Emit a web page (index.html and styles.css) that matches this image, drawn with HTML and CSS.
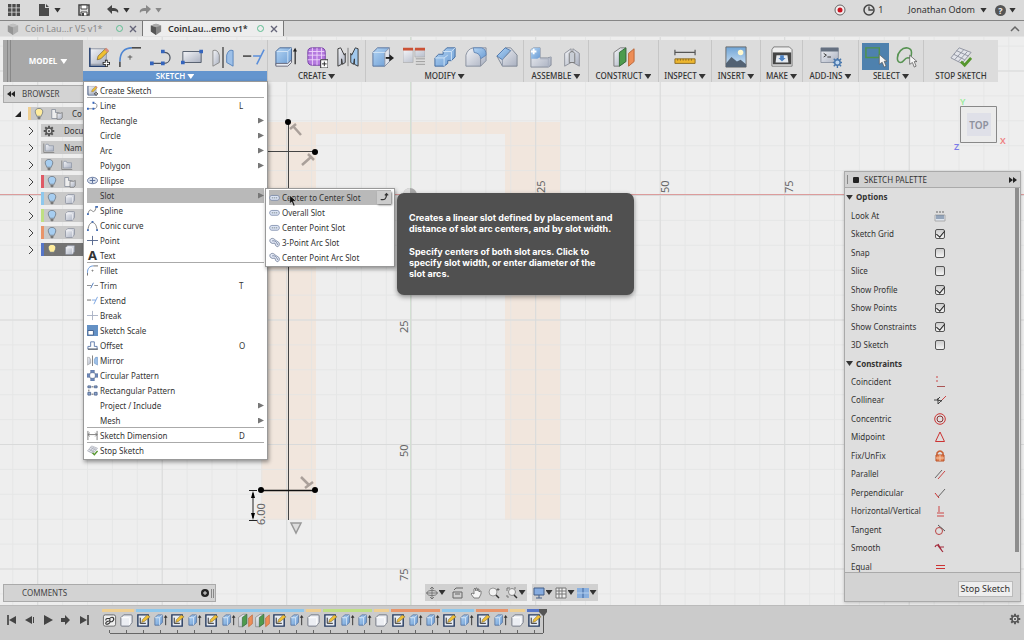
FILE: index.html
```html
<!DOCTYPE html>
<html lang="en">
<head>
<meta charset="utf-8">
<title>CoinLau...emo v1*</title>
<link rel="stylesheet" href="styles.css">
</head>
<body>
<svg class="defs" aria-hidden="true">
  <defs>
    <linearGradient id="gb" x1="0" y1="0" x2="1" y2="1"><stop offset="0" stop-color="#b4d5f4"/><stop offset="1" stop-color="#6a9bd3"/></linearGradient>
    <linearGradient id="gg" x1="0" y1="0" x2="1" y2="1"><stop offset="0" stop-color="#f4f5f8"/><stop offset="1" stop-color="#a9b0c0"/></linearGradient>
    <linearGradient id="gs" x1="0" y1="0" x2="0" y2="1"><stop offset="0" stop-color="#6fa4d6"/><stop offset="1" stop-color="#d3e5f5"/></linearGradient>
  </defs>
  <symbol id="sketch" viewBox="0 0 24 24"><path d="M2 3h18v17H2z" fill="url(#gg)" stroke="#8d94a2"/><path d="M2 2v20h19" fill="none" stroke="#26406f" stroke-width="1.600"/><path d="M10 15l1-4 8-8 3 3-8 8z" fill="#f0c030" stroke="#7b652c" stroke-width=".8"/><path d="M18 4l2-2 3 3-2 2z" fill="#d98c7c"/><path d="M20 15v8M16 19h8" stroke="#222" stroke-width="3"/><path d="M20 16v6M17 19h6" stroke="#fff" stroke-width="1.200"/></symbol>
  <symbol id="fillet" viewBox="0 0 24 24"><path d="M1 23v-6" stroke="#333" stroke-width="1.500"/><path d="M1 17C1 7 6 2 14 2" fill="none" stroke="#4f86d2" stroke-width="1.800"/><path d="M14 2h10" stroke="#333" stroke-width="1.500"/><path d="M12 10v5M9.500 12h5" stroke="#555"/></symbol>
  <symbol id="line" viewBox="0 0 24 24"><path d="M3 19h12c9 0 9-12 1-12h-3" fill="none" stroke="#4b5361" stroke-width="1.300"/><path d="M0 17h4v4H0zM12 17h4v4h-4zM12 4h4v4h-4z" fill="#3565bd"/></symbol>
  <symbol id="rect" viewBox="0 0 24 24"><path d="M2 6h20v12H2z" fill="url(#gg)" stroke="#4f5968"/><path d="M0 16h4v4H0zM20 4h4v4h-4z" fill="#3565bd"/></symbol>
  <symbol id="mirror" viewBox="0 0 24 24"><path d="M1 22V5q5-2 7 5v8z" fill="url(#gg)" stroke="#888"/><path d="M23 22V5q-5-2-7 5v8z" fill="#9dc0e8" stroke="#5582bb"/><path d="M12 1v23" stroke="#333" stroke-width="1.300"/></symbol>
  <symbol id="extend" viewBox="0 0 24 24"><path d="M0 11h9" stroke="#333" stroke-width="1.500"/><path d="M11 11h8M15 20l8-16" stroke="#5b8fda" stroke-width="1.700"/></symbol>
  <symbol id="extrude" viewBox="0 0 24 24"><path d="M1 6l4-4h13v15l-4 4H1z" fill="url(#gb)" stroke="#42618e"/><path d="M2 6h12v13M14 6l4-4" fill="none" stroke="#d5e6f6"/><path d="M1 19h13l4-4v3l-4 4H1z" fill="#e9edf3" stroke="#667"/><path d="M22 20V5" stroke="#222" stroke-width="1.300"/><path d="M19.500 6L22 2l2 4z" fill="#222"/></symbol>
  <symbol id="textrude" viewBox="0 0 16 16"><path d="M2 5l3-3h5v8l-3 3H2z" fill="url(#gb)" stroke="#4a6a98" stroke-width=".8"/><path d="M2 5h5v8M7 5l3-3" fill="none" stroke="#e3eefa" stroke-width=".8"/><path d="M13.500 13V4" stroke="#333"/><path d="M11.500 5l2-3 2 3z" fill="#333"/></symbol>
  <symbol id="form" viewBox="0 0 24 24"><path d="M2 6q0-4 5-4h9q5 0 5 5v9q0 5-5 5H7q-5 0-5-5z" fill="#b478df" stroke="#713c9f"/><path d="M2 10h19M2 15h19M7 2v19M12 2v19M17 2v19M3 6h17" stroke="#edd4fa" fill="none"/><path d="M16 15h8v9h-8z" fill="#fff" stroke="#222"/><path d="M20 17v5M17.500 19.500h5" stroke="#222"/></symbol>
  <symbol id="mirror3" viewBox="0 0 24 24"><path d="M1 3l3-1 4 8 1-2v10l-3 2-1-6v6l-4 2z" fill="url(#gg)" stroke="#333"/><path d="M23 3l-3-1-4 8-1-2v10l3 2 1-6v6l4 2z" fill="#a1c9ee" stroke="#333"/><path d="M12 2v20" stroke="#777"/></symbol>
  <symbol id="press" viewBox="0 0 24 24"><path d="M1 7l5-5h13v15l-5 5H1z" fill="url(#gb)" stroke="#557099"/><path d="M14 7l5-5v15l-5 5z" fill="#e2e5ec" stroke="#8992a5"/><path d="M1 7h13" stroke="#d7e8f7"/><path d="M15 13h5" stroke="#222" stroke-width="2"/><path d="M19 9l5 4-5 4z" fill="#222"/></symbol>
  <symbol id="filletwin" viewBox="0 0 24 24"><path d="M0 4h11v14H0zM13 4h11v8H13z" fill="url(#gg)" stroke="#aaa" stroke-width=".7"/><path d="M0 2h11v3H0zM13 2h11v3H13z" fill="#cb5236"/><path d="M14 14h10M14 17h10M14 20h10" stroke="#999"/></symbol>
  <symbol id="combine" viewBox="0 0 24 24"><path d="M1 13l4-4h5V6l4-4h9v10l-4 4h-4v3l-4 3H1z" fill="url(#gb)" stroke="#3f689d"/><path d="M1 13h10v9M10 6h9v10M19 6l4-4M11 13l4-3" fill="none" stroke="#d3e6f7"/></symbol>
  <symbol id="round" viewBox="0 0 24 24"><path d="M1 22V10q2-7 8-8h14v14l-6 6z" fill="url(#gg)" stroke="#858d9c"/><path d="M9 2h9q5 1 5 8l-6 4q0-6-7-7z" fill="url(#gb)" stroke="#6285b3"/><path d="M17 14v8" stroke="#858d9c"/></symbol>
  <symbol id="chamfer" viewBox="0 0 24 24"><path d="M1 11l9-9h6l7 8v12H7z" fill="url(#gg)" stroke="#7d8593"/><path d="M1 11l9-9 6 3-9 10z" fill="url(#gb)" stroke="#507aae"/><path d="M7 15v7M7 15l9-10" stroke="#8e98a8"/></symbol>
  <symbol id="component" viewBox="0 0 24 24"><path d="M1 4l3-2h7v11h8l4-1v9l-3 2H1z" fill="url(#gg)" stroke="#858c9a"/><path d="M1 4l3-2h7v10l-3 2H1z" fill="url(#gb)"/><path d="M4 3v6M1 6h6" stroke="#fff" stroke-width="2"/><path d="M11 14h9v9M20 14l3-2" fill="none" stroke="#aab0bf"/></symbol>
  <symbol id="joint" viewBox="0 0 24 24"><path d="M4 8l7-5v15l-7 4zM13 3l7 5v14l-7-4z" fill="url(#gg)" stroke="#8d9199"/><path d="M9 18V8q3-4 6 0v10z" fill="#c9ced6" stroke="#777"/></symbol>
  <symbol id="planes" viewBox="0 0 24 24"><path d="M1 7l7-5h6v15l-7 5H1z" fill="url(#gg)" stroke="#777"/><path d="M7 7l7-5v15l-7 5z" fill="#4d9b4d" stroke="#336c37"/><path d="M17 8l6-5v14l-6 5z" fill="#ee8e57" stroke="#b96435"/></symbol>
  <symbol id="ruler" viewBox="0 0 24 24"><path d="M1 7h22M1 4v6M23 4v6" stroke="#555" stroke-width="1.300"/><path d="M1 14h22v5H1z" fill="#edb62f" stroke="#8b6a22"/><path d="M4 14v2M7 14v2M10 14v2M13 14v2M16 14v2M19 14v2" stroke="#8b6a22"/></symbol>
  <symbol id="image" viewBox="0 0 24 24"><path d="M1 1h22v22H1z" fill="url(#gs)" stroke="#666"/><circle cx="17" cy="7" r="3" fill="#fff8ce"/><path d="M1 19l6-7 6 5 4-2 6 5v3H1z" fill="#536273"/></symbol>
  <symbol id="printer" viewBox="0 0 24 24"><path d="M3 1h17l3 3v18H1V4z" fill="#eee" stroke="#777"/><path d="M2 7h20v13H2z" fill="#454545"/><path d="M6 10h12l1 8H5z" fill="#e5eaf0"/><path d="M10 10h4v3h2l-4 4-4-4h2z" fill="#4d83c5"/></symbol>
  <symbol id="addins" viewBox="0 0 24 24"><path d="M1 2h19v16H1z" fill="url(#gg)" stroke="#8b93a1"/><path d="M1 2h19v4H1z" fill="#657080"/><path d="M4 8l3 2-3 2M8 12h4" fill="none" stroke="#333"/><path d="M19 13v11M14 18h10M15 14l8 8M23 14l-8 8" stroke="#4977ac" stroke-width="1.500"/><circle cx="19" cy="18" r="3" fill="#c0d8f0" stroke="#4977ac" stroke-width="1.500"/></symbol>
  <symbol id="selbox" viewBox="0 0 24 24"><path d="M2 3h14v10H2z" fill="none" stroke="#4f934b" stroke-width="1.500"/><path d="M16 10v10l3-2 2 5 2-1-2-5h3z" fill="#f5f5f5" stroke="#555" stroke-width=".700"/></symbol>
  <symbol id="lasso" viewBox="0 0 24 24"><path d="M15 13c-5-1-5 5-9 5-5 0-4-9 0-13 5-5 12-3 12 2 0 4-1 6-3 6z" fill="none" stroke="#579352" stroke-width="1.700"/><path d="M16 10v10l3-2 2 5 2-1-2-5h3z" fill="#f5f5f5" stroke="#555" stroke-width=".8"/></symbol>
  <symbol id="stopsketch" viewBox="0 0 24 24"><path d="M1 13L10 2l13 5-10 12z" fill="#e2e4ea" stroke="#8c919e"/><path d="M4 9l12 6M7 5l13 6M5 15L15 4M9 17L19 6" stroke="#8c919e"/><path d="M12 17l4 4 7-8" fill="none" stroke="#55962d" stroke-width="3"/></symbol>
  <symbol id="box" viewBox="0 0 16 16"><path d="M2 5l3-3h8q1 0 1 1v7l-3 4H3q-1 0-1-1z" fill="#eceef3" stroke="#6f7480"/><path d="M2.500 5h8q1 0 1 1v7" fill="none" stroke="#fff"/></symbol>
  <symbol id="body" viewBox="0 0 16 16"><path d="M2 5l3-3h8q1 0 1 1v7l-3 4H3q-1 0-1-1z" fill="url(#gg)" stroke="#8a8f9c"/><path d="M2.500 5h8q1 0 1 1v7" fill="none" stroke="#f4f4f8"/></symbol>
  <symbol id="tsketch" viewBox="0 0 16 16"><path d="M2 2h11v12H2z" fill="#e8edf4" stroke="#263b60" stroke-width="1.500"/><path d="M4.500 5v6h6" fill="none" stroke="#222"/><path d="M6 10l1-3 5-5 3 2-6 5z" fill="#efbf36" stroke="#695a36" stroke-width=".5"/></symbol>
  <symbol id="link" viewBox="0 0 16 16"><rect x="1.500" y="2" width="13" height="12" rx="2" fill="#eee" stroke="#666"/><path d="M4 8c0-3 2-2 4-2 4-4 6 1 3 3-2 1-4-1-2-2M9 9c-1 3-5 4-5 2s4-3 5-2" fill="none" stroke="#333" stroke-width="1.200"/></symbol>
  <symbol id="bulb" viewBox="0 0 16 16"><path d="M5 11c0-2-2-3-2-6 0-6 10-6 10 0 0 3-2 4-2 6z" fill="currentColor" stroke="#66707c"/><path d="M6 12h4v2l-1 1H7l-1-1z" fill="#777"/></symbol>
  <symbol id="folder" viewBox="0 0 16 16"><path d="M1 14V2M1 14h14" stroke="#777"/><path d="M3 12V5l1-2h3l1 2h6v7z" fill="url(#gg)" stroke="#8d95a5"/></symbol>
  <symbol id="gear" viewBox="0 0 16 16"><path d="M8 1v14M1 8h14M3 3l10 10M13 3L3 13" stroke="currentColor" stroke-width="2.500"/><circle cx="8" cy="8" r="4" fill="#ddd" stroke="currentColor" stroke-width="2"/><circle cx="8" cy="8" r="1.500" fill="currentColor"/></symbol>
  <symbol id="comp" viewBox="0 0 16 16"><path d="M1 2h5v4h4l3 2v6H1z" fill="#eee" stroke="#818896"/><path d="M8 7h5l2-1v7l-2 2H8z" fill="url(#gg)" stroke="#777"/></symbol>
  <symbol id="slot" viewBox="0 0 16 12"><path d="M4 3h8c4 0 4 7 0 7H4c-4 0-4-7 0-7z" fill="#dce4f4" stroke="#66779c"/><path d="M4 6.500h8" stroke="#566" stroke-dasharray="2 1"/></symbol>
  <symbol id="arcslot" viewBox="0 0 14 12"><path d="M2 6c-3-4 2-7 5-4s7 3 6 7-5 2-5-1-3 1-6-2z" fill="#e2e8f5" stroke="#667491"/><path d="M4 4c4-1 6 2 7 5" fill="none" stroke="#667491"/></symbol>
  <symbol id="spline" viewBox="0 0 12 12"><path d="M1 10C4-2 7 15 10 2" fill="none" stroke="#777"/><path d="M0 9h2v2H0zM9 1h3v2H9z" fill="#456fb6"/></symbol>
  <symbol id="conic" viewBox="0 0 12 12"><path d="M1 11C2 0 10 0 11 11" fill="none" stroke="#777"/><path d="M0 10h2v2H0zM10 10h2v2h-2zM5 1h2v2H5z" fill="#456fb6"/></symbol>
  <symbol id="point" viewBox="0 0 12 12"><path d="M6 1v10M0 6h12" stroke="#52648b"/></symbol>
  <symbol id="trim" viewBox="0 0 12 12"><path d="M0 6h5M8 6h4" stroke="#888"/><path d="M4 9l3-6" stroke="#527dbb"/></symbol>
  <symbol id="scale" viewBox="0 0 12 12"><path d="M0 0h12v12H0z" fill="#6390c4"/><path d="M1 6h6v5H1z" fill="#fff" stroke="#405c88"/></symbol>
  <symbol id="offset" viewBox="0 0 12 12"><path d="M1 10V7h3V2h4v5h3v3z" fill="none" stroke="#5c78aa"/><path d="M1 10h11" stroke="#555"/></symbol>
  <symbol id="circ" viewBox="0 0 12 12"><circle cx="6" cy="6" r="3.500" fill="none" stroke="#7f8da8"/><path d="M4 0h4v3H4zM4 9h4v3H4zM0 4h3v4H0zM9 4h3v4H9z" fill="#6e89bb" stroke="#526993" stroke-width=".5"/></symbol>
  <symbol id="rpat" viewBox="0 0 12 12"><path d="M1 1h3v2H1zM8 1h3v2H8zM1 8h3v3H1zM8 8h3v3H8z" fill="#8fa6cd" stroke="#526993"/><path d="M5 2h2M2 5v2M5 10h2" stroke="#555"/></symbol>
  <symbol id="dim" viewBox="0 0 12 12"><path d="M1 1v10M11 1v10M1 5h10M3 3L1 5l2 2M9 3l2 2-2 2" fill="none" stroke="#777"/></symbol>
  <symbol id="ellipse" viewBox="0 0 12 12"><ellipse cx="6" cy="6" rx="5.500" ry="3.500" fill="#dbe2ee" stroke="#64759c"/><path d="M3 6h6M6 3v6" stroke="#566b98"/></symbol>
  <symbol id="cube" viewBox="0 0 14 14"><path d="M1 3l6-2 6 2v7l-6 4-6-4z" fill="#858585"/><path d="M1 3l6 2v9l-6-4z" fill="#555"/><path d="M1 3l6-2 6 2-6 2z" fill="#aaa"/></symbol>
  <symbol id="close" viewBox="0 0 8 8"><path d="M1 1l6 6M7 1L1 7" stroke="#66667a" stroke-width="1.400"/></symbol>
</svg>

<div class="app">
  <header class="topbar">
    <button class="ib" aria-label="Data panel"><svg width="12" height="12" viewBox="0 0 12 12"><path d="M0 0h3.400v3.400H0zM4.300 0h3.400v3.400H4.300zM8.600 0H12v3.400H8.600zM0 4.300h3.400v3.400H0zM4.300 4.300h3.400v3.400H4.300zM8.600 4.300H12v3.400H8.600zM0 8.600h3.400V12H0zM4.300 8.600h3.400V12H4.300zM8.600 8.600H12V12H8.600z" fill="#4b4b4b"/></svg></button>
    <button class="ib file" aria-label="File"><svg width="10" height="12" viewBox="0 0 10 12"><path d="M0 0h6v4h4v8H0zM7 0l3 3H7z" fill="#4b4b4b"/></svg><i class="caret"></i></button>
    <button class="ib save" aria-label="Save"><svg width="12" height="12" viewBox="0 0 12 12"><path d="M1 1h10v10H1z" fill="#ddd" stroke="#444" stroke-width="1.500"/><path d="M3 1h6v4H3zM3 8h6v4H3z" fill="#fff" stroke="#444"/><path d="M4 9h2v3H4z" fill="#444"/></svg></button>
    <button class="ib undo" aria-label="Undo"><svg width="12" height="10" viewBox="0 0 12 10"><path d="M0 4l5-4v3c5 0 7 2 6 5-1-2-3-2-6-2v3z" fill="#454545"/></svg><i class="caret"></i></button>
    <button class="ib redo" aria-label="Redo"><svg width="12" height="10" viewBox="0 0 12 10"><path d="M12 4L7 0v3C2 3 0 5 1 8c1-2 3-2 6-2v3z" fill="#888"/></svg><i class="caret"></i></button>
    <span class="grow"></span>
    <button class="ib rec" aria-label="Record"><svg width="12" height="12" viewBox="0 0 12 12"><circle cx="6" cy="6" r="5" fill="#f4eeee" stroke="#666"/><circle cx="6" cy="6" r="2.500" fill="#c91622"/></svg></button>
    <button class="ib jobs"><svg width="12" height="12" viewBox="0 0 12 12"><circle cx="6" cy="6" r="5" fill="none" stroke="#444" stroke-width="1.500"/><path d="M6 2.500V6h4" fill="none" stroke="#444" stroke-width="1.300"/></svg>1</button>
    <button class="ib user">Jonathan Odom<i class="caret"></i></button>
    <button class="ib help" aria-label="Help"><span class="q">?</span><i class="caret"></i></button>
  </header>
  <nav class="tabs">
    <div class="tab"><svg width="12" height="12"><use href="#cube"/></svg><span>Coin Lau...r V5 v1*</span><i class="ring"></i><button aria-label="Close tab"><svg><use href="#close"/></svg></button></div>
    <div class="tab on"><svg width="12" height="12"><use href="#cube"/></svg><span>CoinLau...emo v1*</span><i class="ring"></i><button aria-label="Close tab"><svg><use href="#close"/></svg></button></div>
    <span class="grow"></span>
    <svg width="10" height="7" viewBox="0 0 10 7"><path d="M1 6l4-4 4 4" fill="none" stroke="#666" stroke-width="1.500"/></svg>
  </nav>

  <main class="work">
    <svg class="canvas" viewBox="0 37 1024 568" preserveAspectRatio="xMinYMin slice" role="img" aria-label="Sketch canvas">
      <defs>
        <pattern id="minor" x="410.700" y="195" width="24.900" height="24.900" patternUnits="userSpaceOnUse"><path d="M.5 0v25M0 .5h25" stroke="#e3e4e4"/></pattern>
        <pattern id="major" x="410.700" y="195" width="124.500" height="124.500" patternUnits="userSpaceOnUse"><path d="M.5 0v125M0 .5h125" stroke="#d9dada"/></pattern>
      </defs>
      <path d="M0 36h3000v2000H0z" fill="#eee"/>
      <path d="M261 122h299v398h-55V134H316v386h-55z" fill="#f1e6dd"/>
      <path d="M0 36h3000v2000H0z" fill="url(#minor)" opacity=".8"/>
      <path d="M0 36h3000v2000H0z" fill="url(#major)"/>
      <path d="M410 36h1v2000h-1z" fill="#d2dfd2"/>
      <path d="M0 194h3000v1H0z" fill="#dc9c9c"/>
      <circle cx="410" cy="195" r="7" fill="#aaa"/><path d="M410 188v7h-7a7 7 0 0 1 7-7z" fill="#ddd"/>
      <path d="M288.500 122v398M260 151.500h55" stroke="#444"/><path d="M261 490.500h54" stroke="#111" stroke-width="1.500"/>
      <circle cx="288" cy="122" r="3"/><circle cx="315" cy="152" r="3"/><circle cx="261" cy="490" r="3"/><circle cx="315" cy="490" r="3"/>
      <path d="M290 129l6-5M293 126l8 9M308 154l6 6M311 157l-9 8M301 477l8 8M305 488l8-6" stroke="#aaa09a" stroke-width="2.500"/>
      <path d="M249 490.500h8M249 520.500h8M253 493v25" stroke="#222"/><path d="M253 491l2 7h-4zM253 520l2-7h-4z"/>
      <path d="M291 523h10l-5 10z" fill="#ddd" stroke="#999" stroke-width="1.500"/>
      <g class="axis"><text transform="translate(545 193) rotate(-90)">25</text><text transform="translate(669 193) rotate(-90)">50</text><text transform="translate(793 193) rotate(-90)">75</text><text transform="translate(408 333) rotate(-90)">25</text><text transform="translate(408 457) rotate(-90)">50</text><text transform="translate(408 581) rotate(-90)">75</text><text transform="translate(265 525) rotate(-90)">6.00</text></g>
    </svg>

    <div class="toolbar">
      <button class="model">MODEL<i class="caret"></i></button>
      <section class="grp g-sketch">
        <div class="icons"><svg><use href="#sketch"/></svg><svg><use href="#fillet"/></svg><svg><use href="#line"/></svg><svg><use href="#rect"/></svg><svg><use href="#mirror"/></svg><svg><use href="#extend"/></svg></div>
        <button class="gl active" aria-expanded="true">SKETCH<i class="caret"></i></button>
        <ul class="menu">
          <li><button><svg><use href="#sketch"/></svg>Create Sketch</button></li>
          <li class="sep"><button><svg><use href="#line"/></svg>Line<kbd>L</kbd></button></li>
          <li><button><svg></svg>Rectangle<i class="more"></i></button></li>
          <li><button><svg></svg>Circle<i class="more"></i></button></li>
          <li><button><svg></svg>Arc<i class="more"></i></button></li>
          <li><button><svg></svg>Polygon<i class="more"></i></button></li>
          <li><button><svg><use href="#ellipse"/></svg>Ellipse</button></li>
          <li class="open"><button class="hot"><svg></svg>Slot<i class="more"></i></button>
            <ul class="submenu">
              <li><button class="hot"><svg><use href="#slot"/></svg>Center to Center Slot<span class="pin"><svg viewBox="0 0 12 12"><path d="M2 9c5 1 7-1 7-6M7 4l2-2 2 2" fill="none" stroke="#333" stroke-width="1.500"/></svg></span></button></li>
              <li><button><svg><use href="#slot"/></svg>Overall Slot</button></li>
              <li><button><svg><use href="#slot"/></svg>Center Point Slot</button></li>
              <li><button><svg><use href="#arcslot"/></svg>3-Point Arc Slot</button></li>
              <li><button><svg><use href="#arcslot"/></svg>Center Point Arc Slot</button></li>
            </ul>
            <div class="tip" role="tooltip"><p>Creates a linear slot defined by placement and<br>distance of slot arc centers, and by slot width.</p><p>Specify centers of both slot arcs. Click to<br>specify slot width, or enter diameter of the<br>slot arcs.</p></div>
            <svg class="pointer" viewBox="0 0 12 18"><path d="M1 1v13l3-3 2.500 6 2.500-1-2.500-6h4.500z" fill="#111" stroke="#eee" stroke-width=".7"/></svg>
          </li>
          <li><button><svg><use href="#spline"/></svg>Spline</button></li>
          <li><button><svg><use href="#conic"/></svg>Conic curve</button></li>
          <li><button><svg><use href="#point"/></svg>Point</button></li>
          <li><button><b>A</b>Text</button></li>
          <li class="sep"><button><svg><use href="#fillet"/></svg>Fillet</button></li>
          <li><button><svg><use href="#trim"/></svg>Trim<kbd>T</kbd></button></li>
          <li><button><svg><use href="#extend"/></svg>Extend</button></li>
          <li><button><svg class="dim"><use href="#point"/></svg>Break</button></li>
          <li><button><svg><use href="#scale"/></svg>Sketch Scale</button></li>
          <li><button><svg><use href="#offset"/></svg>Offset<kbd>O</kbd></button></li>
          <li><button><svg><use href="#mirror"/></svg>Mirror</button></li>
          <li><button><svg><use href="#circ"/></svg>Circular Pattern</button></li>
          <li><button><svg><use href="#rpat"/></svg>Rectangular Pattern</button></li>
          <li><button><svg></svg>Project / Include<i class="more"></i></button></li>
          <li><button><svg></svg>Mesh<i class="more"></i></button></li>
          <li class="sep"><button><svg><use href="#dim"/></svg>Sketch Dimension<kbd>D</kbd></button></li>
          <li class="sep"><button><svg><use href="#stopsketch"/></svg>Stop Sketch</button></li>
        </ul>
      </section>
      <section class="grp g-create"><div class="icons"><svg><use href="#extrude"/></svg><svg><use href="#form"/></svg><svg><use href="#mirror3"/></svg></div><button class="gl">CREATE<i class="caret"></i></button></section>
      <section class="grp g-modify"><div class="icons"><svg><use href="#press"/></svg><svg><use href="#filletwin"/></svg><svg><use href="#combine"/></svg><svg><use href="#round"/></svg><svg><use href="#chamfer"/></svg></div><button class="gl">MODIFY<i class="caret"></i></button></section>
      <section class="grp g-assemble"><div class="icons"><svg><use href="#component"/></svg><svg><use href="#joint"/></svg></div><button class="gl">ASSEMBLE<i class="caret"></i></button></section>
      <section class="grp g-construct"><div class="icons"><svg><use href="#planes"/></svg></div><button class="gl">CONSTRUCT<i class="caret"></i></button></section>
      <section class="grp g-inspect"><div class="icons"><svg><use href="#ruler"/></svg></div><button class="gl">INSPECT<i class="caret"></i></button></section>
      <section class="grp g-insert"><div class="icons"><svg><use href="#image"/></svg></div><button class="gl">INSERT<i class="caret"></i></button></section>
      <section class="grp g-make"><div class="icons"><svg><use href="#printer"/></svg></div><button class="gl">MAKE<i class="caret"></i></button></section>
      <section class="grp g-addins"><div class="icons"><svg><use href="#addins"/></svg></div><button class="gl">ADD-INS<i class="caret"></i></button></section>
      <section class="grp g-select"><div class="icons"><svg class="sel"><use href="#selbox"/></svg><svg><use href="#lasso"/></svg></div><button class="gl">SELECT<i class="caret"></i></button></section>
      <section class="grp g-stop"><div class="icons"><svg><use href="#stopsketch"/></svg></div><button class="gl">STOP SKETCH</button></section>
    </div>

    <div class="stage">
      <aside class="left">
        <div class="phead browser"><svg width="8" height="6" viewBox="0 0 8 6"><path d="M4 0v6L0 3zM8 0v6L4 3z" fill="#222"/></svg>BROWSER</div>
        <div class="tree">
          <div class="node root"><svg class="tw" viewBox="0 0 8 8"><path d="M7 1v6H1z" fill="#222"/></svg><div class="nb yl"><svg class="lit"><use href="#bulb"/></svg><svg><use href="#comp"/></svg><span>Co</span></div></div>
          <div class="node"><svg class="tw" viewBox="0 0 8 8"><path d="M2 0l4 4-4 4" fill="none" stroke="#444"/></svg><div class="nb"><svg class="dark"><use href="#gear"/></svg><span>Docu</span></div></div>
          <div class="node"><svg class="tw" viewBox="0 0 8 8"><path d="M2 0l4 4-4 4" fill="none" stroke="#444"/></svg><div class="nb"><svg><use href="#folder"/></svg><span>Nam</span></div></div>
          <div class="node"><svg class="tw" viewBox="0 0 8 8"><path d="M2 0l4 4-4 4" fill="none" stroke="#444"/></svg><div class="nb"><svg><use href="#bulb"/></svg><svg><use href="#folder"/></svg></div></div>
          <div class="node"><svg class="tw" viewBox="0 0 8 8"><path d="M2 0l4 4-4 4" fill="none" stroke="#444"/></svg><div class="nb rd"><svg><use href="#bulb"/></svg><svg><use href="#comp"/></svg></div></div>
          <div class="node"><svg class="tw" viewBox="0 0 8 8"><path d="M2 0l4 4-4 4" fill="none" stroke="#444"/></svg><div class="nb bl"><svg><use href="#bulb"/></svg><svg><use href="#body"/></svg></div></div>
          <div class="node"><svg class="tw" viewBox="0 0 8 8"><path d="M2 0l4 4-4 4" fill="none" stroke="#444"/></svg><div class="nb gr"><svg><use href="#bulb"/></svg><svg><use href="#body"/></svg></div></div>
          <div class="node"><svg class="tw" viewBox="0 0 8 8"><path d="M2 0l4 4-4 4" fill="none" stroke="#444"/></svg><div class="nb or"><svg><use href="#bulb"/></svg><svg><use href="#body"/></svg></div></div>
          <div class="node"><svg class="tw" viewBox="0 0 8 8"><path d="M2 0l4 4-4 4" fill="none" stroke="#444"/></svg><div class="nb db"><svg class="lit"><use href="#bulb"/></svg><svg><use href="#body"/></svg></div></div>
        </div>
        <div class="phead comments">COMMENTS<span class="grow"></span><svg width="8" height="8" viewBox="0 0 8 8"><circle cx="4" cy="4" r="4" fill="#222"/><path d="M4 2v4M2 4h4" stroke="#ddd"/></svg><i class="grip"></i></div>
      </aside>

      <div class="center">
        <div class="nav">
          <button aria-label="Orbit"><svg viewBox="0 0 12 12"><path d="M6 0v12M0 6h12M4 2l2-2 2 2M4 10l2 2 2-2" fill="none" stroke="#666" stroke-width=".8"/><ellipse cx="6" cy="6" rx="5" ry="2.500" fill="none" stroke="#777"/></svg><i class="caret"></i></button>
          <button aria-label="Look at"><svg viewBox="0 0 12 12"><path d="M2 3l2-2h7M1 5h9v6H1zM3 7h5" fill="none" stroke="#666"/></svg></button>
          <button aria-label="Pan"><svg viewBox="0 0 12 12"><path d="M4 11L1 7l1-1 2 1V2l1-1 1 3V1h1l1 3V2h1v3l1-1h1v3l-2 4z" fill="#f6f6f6" stroke="#666" stroke-width=".8"/></svg></button>
          <button aria-label="Zoom"><svg viewBox="0 0 12 12"><circle cx="5" cy="5" r="4" fill="#f2f2f2" stroke="#999"/><path d="M8 8l3 3" stroke="#333" stroke-width="1.500"/><path d="M10 1v3M8.500 2.500h3" stroke="#555" stroke-width=".8"/></svg></button>
          <button aria-label="Fit"><svg viewBox="0 0 12 12"><path d="M1 4V1h3M8 1h2M1 8v2h2" fill="none" stroke="#777"/><circle cx="6" cy="5" r="3.500" fill="#f2f2f2" stroke="#888"/><path d="M8 8l3 3" stroke="#333" stroke-width="1.500"/></svg><i class="caret"></i></button>
        </div>
        <div class="nav">
          <button aria-label="Display"><svg viewBox="0 0 12 12"><path d="M1 1h10v7H1z" fill="#86ace0" stroke="#455e87"/><path d="M6 8v3M3 11h6" stroke="#455e87"/></svg><i class="caret"></i></button>
          <button aria-label="Grid"><svg viewBox="0 0 12 12"><path d="M1 1h10v10H1zM1 4h10M1 7h10M4 1v10M7 1v10" fill="#f0f0f0" stroke="#777"/></svg><i class="caret"></i></button>
          <button aria-label="Viewports"><svg viewBox="0 0 12 12"><path d="M0 1h12v10H0z" fill="#8ab0df"/><path d="M6 1v10" stroke="#3e649d"/><path d="M0 6h12" stroke="#b6d0ee"/></svg><i class="caret"></i></button>
        </div>
      </div>

      <aside class="right">
        <svg class="viewcube" viewBox="0 0 56 64"><text x="10" y="13" fill="#99ec99">Y</text><path d="M10.500 14.500h36v36h-36z" fill="#ebebeb" stroke="#888"/><path d="M17 21h24v23H17z" fill="#dfe0e8"/><text class="top" x="29" y="37" text-anchor="middle">TOP</text><text x="4" y="58" fill="#7a7ae8">Z</text><text x="50" y="52" fill="#ef8080">X</text></svg>
        <section class="palette">
          <h2><i class="grip"></i><i class="min"></i>SKETCH PALETTE<span class="grow"></span><svg width="8" height="6" viewBox="0 0 8 6"><path d="M0 0l4 3-4 3zM4 0l4 3-4 3z" fill="#222"/></svg></h2>
          <div class="pbody"><div class="rows">
            <h3><i class="caret"></i>Options</h3>
            <div class="row"><span>Look At</span><svg viewBox="0 0 12 12"><path d="M2 2h8" stroke="#666" stroke-dasharray="2 1"/><path d="M1 5h10v6H1z" fill="#dde4ed" stroke="#aaa"/><path d="M2 6h8M2 8h8" stroke="#4d6688"/></svg></div>
            <label class="row"><span>Sketch Grid</span><input type="checkbox" checked></label>
            <label class="row"><span>Snap</span><input type="checkbox"></label>
            <label class="row"><span>Slice</span><input type="checkbox"></label>
            <label class="row"><span>Show Profile</span><input type="checkbox" checked></label>
            <label class="row"><span>Show Points</span><input type="checkbox" checked></label>
            <label class="row"><span>Show Constraints</span><input type="checkbox" checked></label>
            <label class="row"><span>3D Sketch</span><input type="checkbox"></label>
            <h3><i class="caret"></i>Constraints</h3>
            <div class="row"><span>Coincident</span><svg viewBox="0 0 12 12"><path d="M3 0v8" stroke="#c44" stroke-dasharray="2 2"/><path d="M3 10.500h8" stroke="#a55"/></svg></div>
            <div class="row"><span>Collinear</span><svg viewBox="0 0 12 12"><path d="M0 6h3l3-3M3 6l5 1M4 4v6l4-4" fill="none" stroke="#333" stroke-width=".9"/><path d="M8 6l4-4" stroke="#c44"/></svg></div>
            <div class="row"><span>Concentric</span><svg viewBox="0 0 12 12"><circle cx="6" cy="6" r="5.300" fill="none" stroke="#c33"/><circle cx="6" cy="6" r="3" fill="none" stroke="#833"/></svg></div>
            <div class="row"><span>Midpoint</span><svg viewBox="0 0 12 12"><path d="M6 1l4.500 9.500h-9z" fill="none" stroke="#c33"/></svg></div>
            <div class="row"><span>Fix/UnFix</span><svg viewBox="0 0 12 12"><path d="M3 5V3q3-4 6 0v2" fill="none" stroke="#c96033" stroke-width="1.500"/><path d="M2 5h8v6H2z" fill="#e88a58" stroke="#b9532a"/><path d="M2 8h8M6 5v6" stroke="#f3c6a8"/></svg></div>
            <div class="row"><span>Parallel</span><svg viewBox="0 0 12 12"><path d="M1 10l7-8" stroke="#666"/><path d="M4 11l7-8" stroke="#c44"/></svg></div>
            <div class="row"><span>Perpendicular</span><svg viewBox="0 0 12 12"><path d="M4 10l7-8" stroke="#666"/><path d="M1 6l4 5" stroke="#c33"/></svg></div>
            <div class="row"><span>Horizontal/Vertical</span><svg viewBox="0 0 12 12"><path d="M5 1v6M3 8h7M3 11h7" stroke="#c44"/></svg></div>
            <div class="row"><span>Tangent</span><svg viewBox="0 0 12 12"><circle cx="5" cy="7" r="3.500" fill="none" stroke="#b44"/><path d="M4 1l7 6" stroke="#555"/></svg></div>
            <div class="row"><span>Smooth</span><svg viewBox="0 0 12 12"><path d="M1 5q2-4 4 0l4 5M4 2l4 7M6 5h4" fill="none" stroke="#a32b3c" stroke-width="1.200"/></svg></div>
            <div class="row"><span>Equal</span><svg viewBox="0 0 12 12"><path d="M2 4.500h9M2 7.500h9" stroke="#c33"/></svg></div>
          </div><i class="thumb"></i></div>
          <footer><button>Stop Sketch</button></footer>
        </section>
      </aside>
    </div>
  </main>

  <footer class="timeline">
    <div class="play">
      <button aria-label="Start"><svg viewBox="0 0 10 10"><path d="M1 0v10" stroke="#333" stroke-width="1.500"/><path d="M9 1v8L2 5z" fill="#444"/></svg></button>
      <button aria-label="Back"><svg viewBox="0 0 10 10"><path d="M7 1v8L0 5z" fill="#444"/><path d="M8.500 2v6" stroke="#444"/></svg></button>
      <button aria-label="Play"><svg viewBox="0 0 10 10"><path d="M1 0v10l9-5z" fill="#444"/></svg></button>
      <button aria-label="Forward"><svg viewBox="0 0 10 10"><path d="M1 2v6M0 3h4V0l5 5-5 5V7H0z" fill="#444"/></svg></button>
      <button aria-label="End"><svg viewBox="0 0 10 10"><path d="M9 0v10" stroke="#333" stroke-width="1.500"/><path d="M1 1v8l7-4z" fill="#444"/></svg></button>
    </div>
    <div class="track">
      <div class="tg yl"><svg><use href="#link"/></svg><svg><use href="#box"/></svg></div>
      <div class="tg bl"><svg><use href="#tsketch"/></svg><svg><use href="#textrude"/></svg><svg><use href="#tsketch"/></svg><svg><use href="#textrude"/></svg><svg><use href="#tsketch"/></svg><svg><use href="#textrude"/></svg><svg><use href="#planes"/></svg><svg><use href="#planes"/></svg><svg><use href="#tsketch"/></svg><svg><use href="#textrude"/></svg></div>
      <div class="tg yl"><svg><use href="#box"/></svg></div>
      <div class="tg gr"><svg><use href="#tsketch"/></svg><svg><use href="#textrude"/></svg><svg><use href="#textrude"/></svg></div>
      <div class="tg yl"><svg><use href="#box"/></svg></div>
      <div class="tg or"><svg><use href="#tsketch"/></svg><svg><use href="#textrude"/></svg><svg><use href="#textrude"/></svg></div>
      <div class="tg bl"><svg><use href="#tsketch"/></svg><svg><use href="#textrude"/></svg></div>
      <div class="tg or"><svg><use href="#tsketch"/></svg><svg><use href="#textrude"/></svg></div>
      <div class="tg yl"><svg><use href="#box"/></svg></div>
      <div class="tg db"><svg><use href="#tsketch"/></svg></div>
      <svg class="marker" viewBox="0 0 8 24"><path d="M0 0h8v3L5 7v17H4V7L0 3z" fill="#555"/></svg>
    </div>
    <span class="grow"></span>
    <button class="settings" aria-label="Settings"><svg width="12" height="12"><use href="#gear"/></svg></button>
  </footer>
</div>
</body>
</html>
```
FILE: styles.css
```css
* { box-sizing: border-box; }
html, body { height: 100%; margin: 0; }
body { font: 8px/12px "Noto Sans", "Open Sans", sans-serif; color: #333; overflow: hidden; }
button { font: inherit; color: inherit; background: none; border: 0; margin: 0; padding: 0; }
ul { list-style: none; margin: 0; padding: 0; }
svg { flex: none; }
.defs { position: absolute; width: 0; height: 0; }
.app { display: flex; flex-direction: column; height: 100%; background: #eee; }
.grow { flex: 1; }
.caret { display: inline-block; width: 7px; height: 5px; margin-left: 3px; background: currentColor; clip-path: polygon(0 0, 100% 0, 50% 100%); }

.topbar { display: flex; align-items: center; height: 21px; padding: 0 8px; background: #dadada; border-bottom: 1px solid #858585; }
.ib { display: flex; align-items: center; }
.ib .caret { color: #333; }
.file { margin-left: 19px; }
.file .caret { margin-left: 5px; }
.save { margin-left: 17px; }
.undo { margin-left: 17px; }
.undo .caret, .redo .caret { margin-left: 4px; }
.redo { margin-left: 9px; }
.topbar .redo .caret { color: #888; }
.jobs { gap: 3px; margin-left: 17px; font-size: 9px; }
.user { margin-left: 25px; font-size: 9px; }
.user .caret { margin-left: 5px; }
.help { margin-left: 8px; }
.help .caret { margin-left: 3px; }
.q { width: 11px; height: 11px; border-radius: 50%; background: #555; color: #eee; font-weight: 700; font-size: 9px; line-height: 11px; text-align: center; }

.tabs { display: flex; align-items: center; height: 16px; padding-right: 4px; background: #d8d8d8; border-bottom: 1px solid #e2e2e2; }
.tab { display: flex; align-items: center; width: 143px; height: 15px; padding: 0 5px 0 7px; border-right: 1px solid #777; color: #888; font-size: 9px; }
.tab span { flex: 1; margin-left: 6px; white-space: nowrap; }
.tab.on { width: 141px; background: #ededed; color: #333; font-weight: 600; }
.tab:not(.on) > svg { opacity: .5; }
.ring { width: 7px; height: 7px; border: 1px solid #5dbd91; border-radius: 50%; }
.tab button, .tab button svg { display: block; width: 8px; height: 8px; }
.tab button { margin-left: 6px; }

.work { position: relative; flex: 1; min-height: 0; display: flex; flex-direction: column; padding: 3px; }
.canvas { position: absolute; inset: 0; width: 100%; height: 100%; }
.axis text { font: 11px "Noto Sans", sans-serif; fill: #666; }

.toolbar { position: relative; z-index: 2; display: flex; align-self: flex-start; height: 42px; max-width: 100%; background: #dcdcdc; }
.model { width: 80px; padding-left: 6px; background: #a8a8a8; color: #fff; font-weight: 700; border-left: 4px solid #a8a8a8; box-shadow: inset 1px 0 #888, inset 3px 0 #a8a8a8, inset 4px 0 #888; }
.grp { position: relative; display: flex; flex-direction: column; align-items: center; border-right: 1px solid #c6c6c6; }
.grp:last-child { border-right: 0; }
.icons { display: flex; align-items: center; gap: 9px; height: 31px; padding-top: 2px; }
.icons svg { width: 22px; height: 22px; }
.g-sketch .icons { padding-left: 2px; }
.icons .sel { width: 27px; height: 27px; padding: 2px; background: #4e81ae; }
.gl { height: 10px; font-weight: 500; color: #333; line-height: 8px; white-space: nowrap; }
.gl .caret { margin-left: 2px; }
.gl.active { width: 100%; background: #6495ce; color: #fff; font-weight: 600; }
.g-sketch { width: 185px; }
.g-create { width: 98px; }
.g-modify { width: 158px; }
.g-assemble { width: 65px; }
.g-construct { width: 70px; }
.g-inspect { width: 53px; }
.g-insert { width: 49px; }
.g-make { width: 42px; }
.g-addins { width: 56px; }
.g-select { width: 65px; }
.g-select .icons { gap: 6px; padding-right: 3px; }
.g-stop { width: 74px; }

.menu, .submenu { position: absolute; background: #fff; border: 1px solid #999; box-shadow: 1px 2px 4px #0006; padding: 1px 3px; }
.menu { top: 41px; left: 0; width: 185px; }
.menu li { position: relative; }
.menu .sep { border-top: 1px solid #aaa; margin-top: -1px; }
.menu button { display: flex; align-items: center; width: 100%; height: 15px; line-height: 11px; white-space: nowrap; }
.menu button > svg, .menu b { width: 11px; height: 11px; margin-right: 2px; }
.menu b { font: 700 13px/11px "Noto Sans", sans-serif; }
.menu .dim { opacity: .5; }
.menu .hot { background: #b9b9b9; }
.menu kbd { margin-left: auto; width: 25px; font: inherit; text-align: left; }
.more { margin-left: auto; width: 6px; height: 6px; background: #777; clip-path: polygon(0 0, 100% 50%, 0 100%); }
.menu .submenu { top: 0; left: 178px; width: 130px; z-index: 2; }
.pin { margin-left: auto; width: 14px; height: 13px; background: #ccc; box-shadow: 1px 1px 2px #777; }
.pin svg { width: 10px; height: 10px; margin: 1px; }
.tip { position: absolute; top: 5px; left: 310px; width: 237px; padding: 19px 10px 4px 12px; border-radius: 7px; background: #505050; color: #fff; font: 700 9px/11px Inter, Roboto, sans-serif; white-space: nowrap; box-shadow: 0 2px 5px #0006; z-index: 2; }
.tip p { margin: 0 0 12px; }
.menu .pointer { position: absolute; top: 6px; left: 202px; width: 8px; height: 13px; z-index: 3; }

.stage { position: relative; flex: 1; min-height: 0; display: flex; justify-content: space-between; }
.left { display: flex; flex-direction: column; width: 213px; padding-top: 3px; }
.phead { display: flex; align-items: center; height: 18px; background: #d3d3d3; border: 1px solid #aaa; color: #444; }
.browser { gap: 7px; width: 180px; padding-left: 3px; }
.comments { margin-top: auto; padding: 0 1px 0 18px; gap: 2px; }
.grip { width: 3px; height: 9px; border: solid #888; border-width: 0 1px; }
.tree { width: 80px; padding-top: 2px; }
.node { display: flex; align-items: center; height: 17px; padding-left: 24px; gap: 6px; }
.root { padding-left: 11px; }
.tw { width: 8px; height: 8px; }
.nb { display: flex; align-items: center; gap: 6px; flex: 1; min-width: 0; height: 13px; padding-left: 2px; background: #c9c9c9; white-space: nowrap; overflow: hidden; border-left: 0 solid; }
.nb span { margin-left: 3px; }
.nb svg { width: 12px; height: 12px; color: #a6cdf0; }
.nb .lit { color: #ffec9c; }
.nb .dark { color: #555; }
.nb.yl, .nb.rd, .nb.bl, .nb.gr, .nb.or, .nb.db { border-left-width: 3px; }
.yl { border-color: #efcf91; }
.rd { border-color: #df5964; }
.bl { border-color: #8ec8ed; }
.gr { border-color: #bfdf83; }
.or { border-color: #e99469; }
.db { border-color: #5575c8; }
.nb.db { background: #747474; }

.center { display: flex; align-items: flex-end; gap: 5px; padding: 0 38px 1px 0; }
.nav { display: flex; align-items: center; justify-content: space-between; height: 17px; padding: 0 1px; gap: 6px; background: #d0d0d0; }
.nav:last-child { gap: 2px; }
.nav button { display: flex; align-items: center; }
.nav svg { width: 12px; height: 12px; }
.nav .caret { margin-left: 1px; }

.right { display: flex; flex-direction: column; align-items: flex-end; width: 177px; }
.viewcube { width: 56px; height: 64px; margin: 10px 15px 0 0; }
.viewcube text { font: 600 9px "Noto Sans", sans-serif; }
.viewcube .top { font-size: 10px; fill: #8e919d; }
.palette { flex: 1; min-height: 0; width: 100%; display: flex; flex-direction: column; margin-top: 15px; background: #dedede; border: 1px solid #aaa; box-shadow: 0 1px 3px #0003; }
.palette h2 { display: flex; align-items: center; gap: 5px; height: 16px; margin: 0; padding: 0 3px 0 0; font-size: 8px; font-weight: 400; background: #d1d1d1; border-bottom: 1px solid #aaa; }
.palette h2 .grip { border-left: 0; }
.min { width: 6px; height: 6px; border-radius: 1px; background: #222; }
.pbody { flex: 1; min-height: 0; display: flex; overflow: hidden; }
.rows { flex: 1; display: grid; grid-auto-rows: 1fr; height: calc(100% + 4px); }
.rows h3 { display: flex; align-items: center; margin: 0; font-size: 8px; font-weight: 700; line-height: 10px; }
.rows h3 .caret { margin: 0 3px 0 1px; }
.row { display: grid; grid-template-columns: 83px 12px; align-items: center; padding-left: 6px; line-height: 10px; }
.row span { white-space: nowrap; }
.row svg { width: 12px; height: 12px; }
.row input { position: relative; appearance: none; width: 10px; height: 10px; margin: 0 0 0 1px; border: 1px solid #555; border-radius: 2px; background: linear-gradient(#ccc, #f4f4f4); }
.row input:checked::after { content: ""; position: absolute; left: 2px; top: -1px; width: 4px; height: 7px; border: solid #222; border-width: 0 1px 1px 0; transform: rotate(40deg); }
.thumb { width: 4px; height: calc(100% - 20px); margin-right: 1px; background: #8d8d8d; }
.palette footer { display: flex; justify-content: flex-end; align-items: flex-end; height: 29px; padding: 0 7px 4px; background: #d3d3d3; border-top: 1px solid #aaa; }
.palette footer button { height: 16px; padding: 0 2px; background: #eee; border: 1px solid #bbb; font-size: 9px; line-height: 14px; }

.timeline { display: flex; height: 35px; background: #cbcbcb; border-top: 1px solid #bbb; padding-right: 3px; }
.play { display: flex; align-items: center; gap: 8px; width: 101px; padding: 0 0 6px 7px; }
.play button, .play svg { display: block; width: 10px; height: 10px; }
.track { display: flex; align-items: flex-start; padding-top: 3px; }
.tg { position: relative; display: flex; padding-top: 4px; }
.tg::before { content: ""; position: absolute; top: 0; left: 1px; right: 1px; border-top: 3px solid; border-color: inherit; }
.tg svg { width: 17px; height: 21px; padding: 0 1px 5px; border-bottom: 1px solid #666; background: linear-gradient(#666, #666) 8px 100% / 1px 3px no-repeat; }
.tg:first-child svg:first-child { border-image: linear-gradient(90deg, transparent 50%, #666 50%) 1; }
.marker { width: 8px; height: 24px; margin-left: -4px; z-index: 1; }
.settings { color: #555; margin-bottom: 6px; }
```
